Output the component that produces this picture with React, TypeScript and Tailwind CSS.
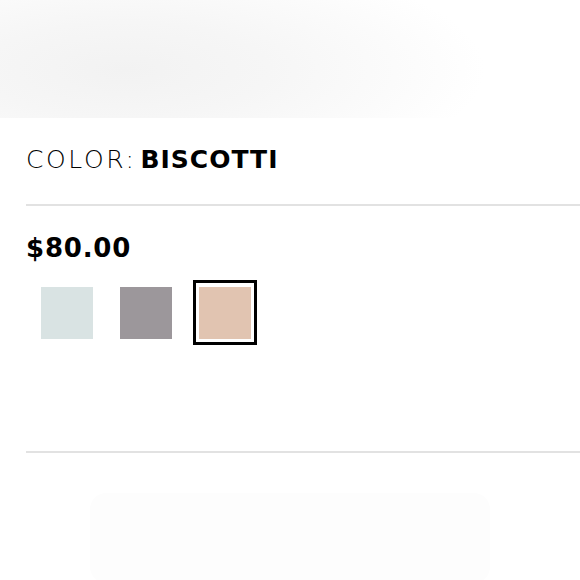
const swatches = [
  { name: "Mist", color: "bg-[#d9e3e3]", selected: false },
  { name: "Slate", color: "bg-[#9c979b]", selected: false },
  { name: "Biscotti", color: "bg-[#e1c4b1]", selected: true },
];

export default function App() {
  return (
    <div className="h-[580px] w-[580px] overflow-hidden bg-white font-['DejaVu_Sans',sans-serif] text-black">
      {/* hazy image strip up top */}
      <div className="h-[118px] w-full bg-[radial-gradient(ellipse_360px_120px_at_125px_70px,#f2f2f2_0%,#f6f6f6_40%,#fbfbfb_75%,#ffffff_100%)]" />

      <div className="pl-[26px]">
        <h2 className="mt-[25px] flex items-baseline text-[25px] leading-[34px]">
          <span className="font-extralight tracking-[2.6px]">COLOR:</span>
          <span className="ml-[4px] font-bold tracking-[1px]">BISCOTTI</span>
        </h2>

        <div className="mt-[27px] h-[2px] bg-[#e2e2e2]" />

        <p className="mt-[27px] text-[26px] font-bold leading-[30px] tracking-[0.8px]">$80.00</p>

        <div className="mt-[17px] flex items-center gap-[15px] pl-[9px]">
          {swatches.map((s) => (
            <button
              key={s.name}
              aria-label={s.name}
              className={`flex h-[65px] w-[64px] items-center justify-center ${
                s.selected ? "border-[3px] border-black" : ""
              }`}
            >
              <span className={`block h-[52px] w-[52px] ${s.color}`} />
            </button>
          ))}
        </div>

        <div className="mt-[106px] h-[2px] bg-[#e2e2e2]" />
      </div>

      <div className="mx-auto mt-[40px] h-[90px] w-[400px] rounded-2xl bg-[#fdfdfd]" />
    </div>
  );
}
